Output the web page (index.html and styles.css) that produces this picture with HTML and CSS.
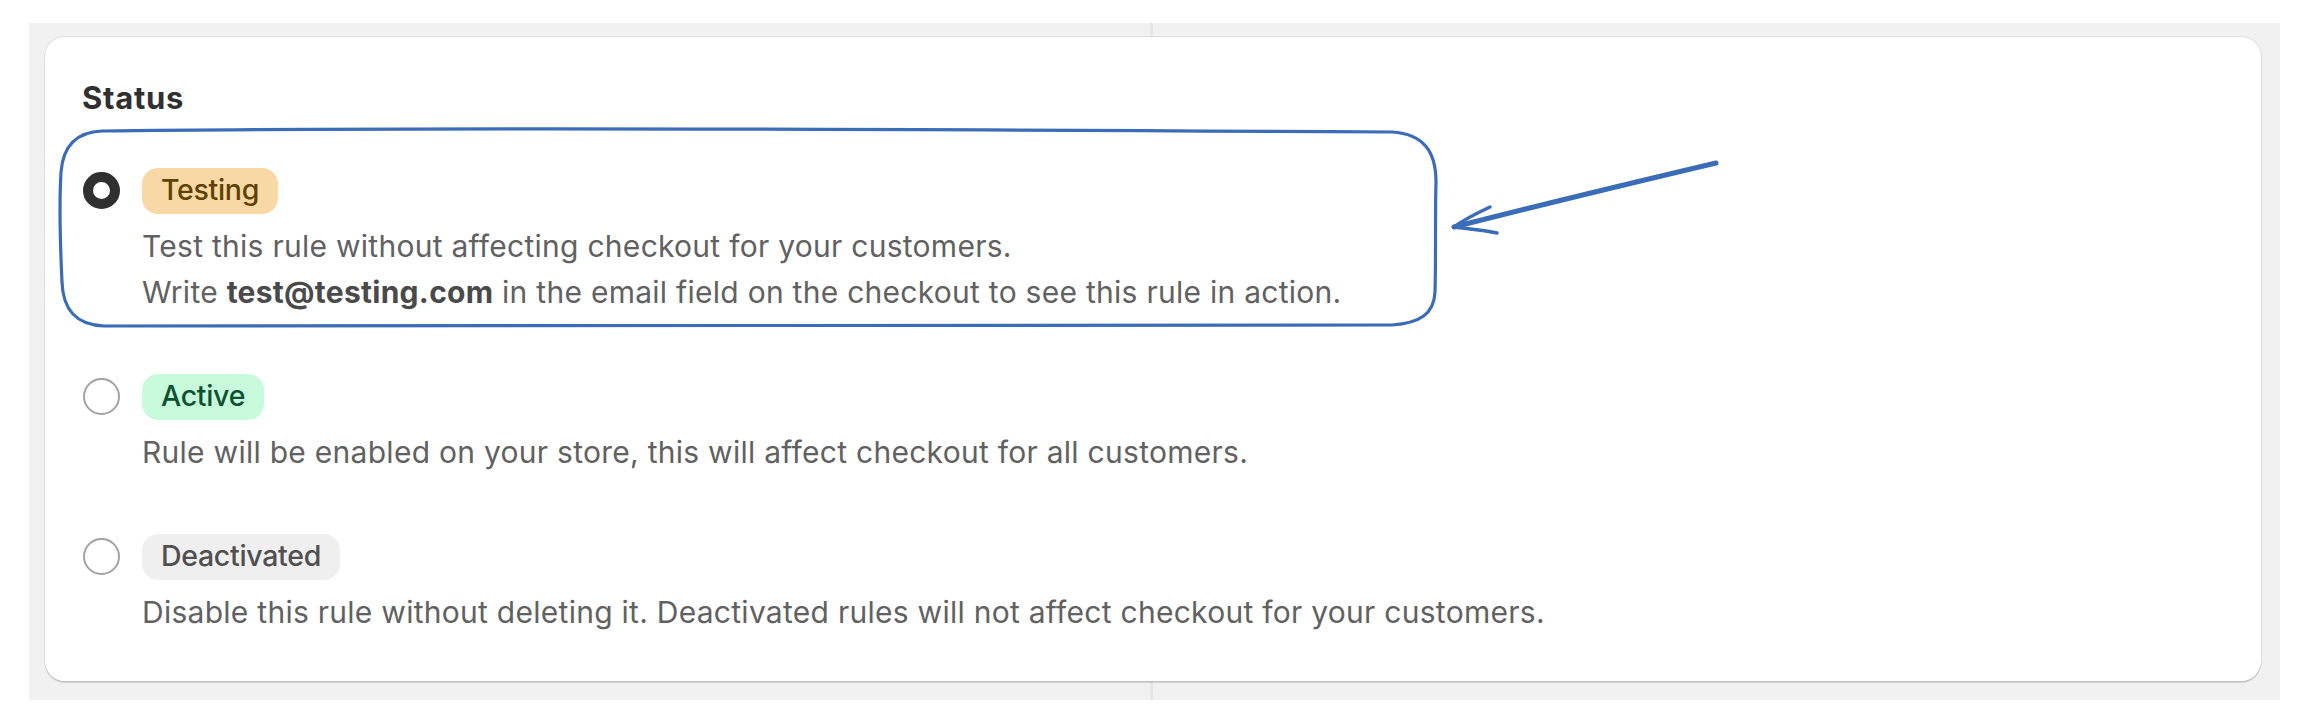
FILE: index.html
```html
<!DOCTYPE html>
<html lang="en">
<head>
<meta charset="utf-8">
<title>Status</title>
<link rel="stylesheet" href="styles.css">
</head>
<body>
<div class="page">
  <div class="panel">
    <section class="card">
      <h2 class="title">Status</h2>
      <div class="options">
        <div class="option">
          <span class="radio radio-checked"></span>
          <div class="body">
            <span class="badge badge-testing">Testing</span>
            <p class="desc">Test this rule without affecting checkout for your customers.<br>Write <strong>test@testing.com</strong> in the email field on the checkout to see this rule in action.</p>
          </div>
        </div>
        <div class="option">
          <span class="radio"></span>
          <div class="body">
            <span class="badge badge-active">Active</span>
            <p class="desc">Rule will be enabled on your store, this will affect checkout for all customers.</p>
          </div>
        </div>
        <div class="option">
          <span class="radio"></span>
          <div class="body">
            <span class="badge badge-off">Deactivated</span>
            <p class="desc">Disable this rule without deleting it. Deactivated rules will not affect checkout for your customers.</p>
          </div>
        </div>
      </div>
    </section>
  </div>
  <svg class="annot" width="2310" height="722" viewBox="0 0 2310 722" xmlns="http://www.w3.org/2000/svg">
    <path class="hand" d="M 102 131 C 420 127, 900 129, 1392 132 C 1424 134, 1436 152, 1436 182 C 1435 220, 1436 260, 1435 292 C 1434 314, 1420 323, 1392 325 C 900 329, 420 328, 104 326 C 76 325, 63 310, 62 282 C 60 240, 59 205, 61 172 C 63 146, 76 132, 102 131 Z"/>
    <path class="arrow" d="M 1716 163 C 1640 181, 1540 205, 1454 227"/>
    <path class="arrow-head" d="M 1490 207 C 1475 214, 1462 221, 1454 227 C 1470 229, 1484 230, 1497 233"/>
  </svg>
</div>
</body>
</html>
```
FILE: styles.css
```css
* { box-sizing: border-box; }
html, body { margin: 0; padding: 0; background: #ffffff; }
body { width: 2310px; height: 722px; overflow: hidden; font-family: Inter, "Noto Sans", "Liberation Sans", sans-serif; }

.page {
  position: relative;
  width: 2310px;
  height: 722px;
  padding: 23px 30px 22px 29px;
}

.panel {
  height: 677px;
  padding: 14px 19px 19px 16px;
  background:
    linear-gradient(to right, transparent 1121px, #e7e7e7 1121px, #e7e7e7 1124px, transparent 1124px),
    #f1f1f1;
}

.card {
  height: 644px;
  background: #ffffff;
  border-radius: 20px;
  padding: 38px 37px 45px 37px;
  box-shadow: 0 0 0 1px rgba(0,0,0,0.07), 0 2px 1px rgba(0,0,0,0.13);
}

.title {
  margin: 0;
  font-size: 31px;
  line-height: 46px;
  font-weight: 650;
  color: #303030;
  letter-spacing: 0.7px;
}

.options {
  display: flex;
  flex-direction: column;
  gap: 59px;
  margin-top: 47px;
}

.option {
  display: flex;
  align-items: flex-start;
  gap: 22px;
}

.radio {
  flex: none;
  width: 37px;
  height: 37px;
  margin-top: 4px;
  margin-left: 1px;
  border-radius: 50%;
  border: 2px solid #a3a3a3;
  background: #fff;
}
.radio-checked {
  border: 10px solid #303030;
}

.body {
  display: flex;
  flex-direction: column;
  align-items: flex-start;
}

.badge {
  display: inline-block;
  font-size: 28.5px;
  line-height: 42px;
  height: 46px;
  padding: 1px 19px 3px;
  border-radius: 16px;
  font-weight: 500;
  letter-spacing: -0.3px;
}
.badge-testing { background: #f8d8a5; color: #5e4200; }
.badge-active { background: #c8fbdc; color: #0c5132; }
.badge-off { background: #efefef; color: #4f4f4f; font-weight: 550; }

.desc {
  margin: 9px 0 0;
  font-size: 30px;
  line-height: 46px;
  color: #616161;
  letter-spacing: 0.27px;
}
.desc strong { font-weight: 650; color: #4a4a4a; }

.annot {
  position: absolute;
  left: 0;
  top: 0;
  pointer-events: none;
}
.hand { fill: none; stroke: #3a6cb7; stroke-width: 3.2; stroke-linejoin: round; }
.arrow { fill: none; stroke: #3a6cb7; stroke-width: 5; stroke-linecap: round; }
.arrow-head { fill: none; stroke: #3a6cb7; stroke-width: 3.5; stroke-linecap: round; stroke-linejoin: round; }
```
